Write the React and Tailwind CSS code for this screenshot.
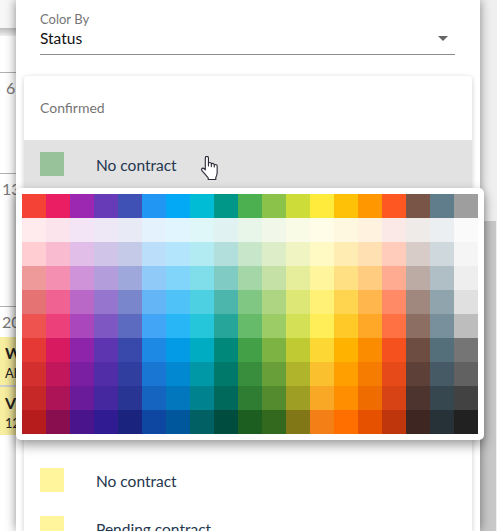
const hues = {
  red: ["#f44336","#ffebee","#ffcdd2","#ef9a9a","#e57373","#ef5350","#e53935","#d32f2f","#c62828","#b71c1c"],
  pink: ["#e91e63","#fce4ec","#f8bbd0","#f48fb1","#f06292","#ec407a","#d81b60","#c2185b","#ad1457","#880e4f"],
  purple: ["#9c27b0","#f3e5f5","#e1bee7","#ce93d8","#ba68c8","#ab47bc","#8e24aa","#7b1fa2","#6a1b9a","#4a148c"],
  deepPurple: ["#673ab7","#ede7f6","#d1c4e9","#b39ddb","#9575cd","#7e57c2","#5e35b1","#512da8","#4527a0","#311b92"],
  indigo: ["#3f51b5","#e8eaf6","#c5cae9","#9fa8da","#7986cb","#5c6bc0","#3949ab","#303f9f","#283593","#1a237e"],
  blue: ["#2196f3","#e3f2fd","#bbdefb","#90caf9","#64b5f6","#42a5f5","#1e88e5","#1976d2","#1565c0","#0d47a1"],
  lightBlue: ["#03a9f4","#e1f5fe","#b3e5fc","#81d4fa","#4fc3f7","#29b6f6","#039be5","#0288d1","#0277bd","#01579b"],
  cyan: ["#00bcd4","#e0f7fa","#b2ebf2","#80deea","#4dd0e1","#26c6da","#00acc1","#0097a7","#00838f","#006064"],
  teal: ["#009688","#e0f2f1","#b2dfdb","#80cbc4","#4db6ac","#26a69a","#00897b","#00796b","#00695c","#004d40"],
  green: ["#4caf50","#e8f5e9","#c8e6c9","#a5d6a7","#81c784","#66bb6a","#43a047","#388e3c","#2e7d32","#1b5e20"],
  lightGreen: ["#8bc34a","#f1f8e9","#dcedc8","#c5e1a5","#aed581","#9ccc65","#7cb342","#689f38","#558b2f","#33691e"],
  lime: ["#cddc39","#f9fbe7","#f0f4c3","#e6ee9c","#dce775","#d4e157","#c0ca33","#afb42b","#9e9d24","#827717"],
  yellow: ["#ffeb3b","#fffde7","#fff9c4","#fff59d","#fff176","#ffee58","#fdd835","#fbc02d","#f9a825","#f57f17"],
  amber: ["#ffc107","#fff8e1","#ffecb3","#ffe082","#ffd54f","#ffca28","#ffb300","#ffa000","#ff8f00","#ff6f00"],
  orange: ["#ff9800","#fff3e0","#ffe0b2","#ffcc80","#ffb74d","#ffa726","#fb8c00","#f57c00","#ef6c00","#e65100"],
  deepOrange: ["#ff5722","#fbe9e7","#ffccbc","#ffab91","#ff8a65","#ff7043","#f4511e","#e64a19","#d84315","#bf360c"],
  brown: ["#795548","#efebe9","#d7ccc8","#bcaaa4","#a1887f","#8d6e63","#6d4c41","#5d4037","#4e342e","#3e2723"],
  blueGrey: ["#607d8b","#eceff1","#cfd8dc","#b0bec5","#90a4ae","#78909c","#546e7a","#455a64","#37474f","#263238"],
  grey: ["#9e9e9e","#fafafa","#f5f5f5","#eeeeee","#e0e0e0","#bdbdbd","#757575","#616161","#424242","#212121"],
};
const columns = Object.values(hues);
const font = { fontFamily: 'Lato, "Noto Sans", sans-serif' };

function Hand() {
  return (
    <svg width="19" height="24" viewBox="1 1.5 15.5 21.5" className="absolute z-[15] left-[200px] top-[156px]">
      <path d="M5 14V3.2a1.4 1.4 0 0 1 2.8 0V10.5V8.6a1.3 1.3 0 0 1 2.6 0v2.4V9.4a1.3 1.3 0 0 1 2.6 0v2V10.4a1.3 1.3 0 0 1 2.6 0v5.8c0 2.2-.6 3.4-1.2 4.6v1.7H7.6v-1.4L2 14.6c-.8-1-.2-2.2.9-2.2.7 0 1.3.4 2.1 1.6z" fill="#fff" stroke="#2b2b38" strokeWidth="1" strokeLinejoin="round" />
    </svg>
  );
}

function Row({ color, label, className = "" }) {
  return (
    <div className={`h-12 flex items-center px-4 ${className}`}>
      <div className="size-6" style={{ backgroundColor: color }} />
      <div className="ml-8 pt-[3px] text-[#24364f]">{label}</div>
    </div>
  );
}

function Event({ title, sub }) {
  return (
    <div className="h-12 bg-[#f8ee9f] overflow-hidden pl-[5px] pt-[6px] text-[#222] whitespace-nowrap">
      <div className="font-bold text-[16px] leading-[20px]">{title}</div>
      <div className="text-[13px] leading-[20px]">{sub}</div>
    </div>
  );
}

function DayCell({ height, pad, label }) {
  return (
    <div className={`border-t border-[#b0b0b0] text-[#777] text-[16px] leading-[20px] whitespace-nowrap ${height} ${pad}`}>{label}</div>
  );
}

export default function App() {
  return (
    <div className="relative flex w-[497px] h-[531px] overflow-hidden bg-[#efefef] text-[15.5px]" style={font}>
      <div className="w-4 shrink-0 overflow-hidden bg-white">
        <div className="h-7 bg-[#f7f7f7]" />
        <div className="h-2 bg-gradient-to-b from-[#bdbdbd] to-[#efefef]" />
        <div className="h-9" />
        <DayCell height="h-[101px]" pad="pl-[6px] pt-[5px]" label="6" />
        <DayCell height="h-[133px]" pad="pl-[2px] pt-[5px]" label="13" />
        <DayCell height="h-[31px]" pad="pl-[2px] pt-[5px]" label="20" />
        <Event title="WA" sub="All" />
        <div className="h-[2px] bg-[#cfcfcf]" />
        <Event title="VS" sub="12" />
      </div>

      <div className="relative z-10 w-[464px] shrink-0 bg-white shadow-[0_0_10px_rgba(0,0,0,0.45)] px-2">
        <div className="px-4 pt-[11px]">
          <div className="text-[13px] leading-[16px] text-[#757575]">Color By</div>
          <div className="flex items-center justify-between h-7 pb-1 mr-px border-b border-[#8c8c8c] pr-[7px] text-[#111]">
            <span>Status</span>
            <span className="w-0 h-0 border-x-[5px] border-x-transparent border-t-[5px] border-t-[#666]" />
          </div>
        </div>
        <div className="mt-[21px] rounded-[4px] bg-white shadow-[0_1px_5px_rgba(0,0,0,0.2)]">
          <div className="h-16 pb-[2px] px-4 flex items-center text-[14px] text-[#757575]">Confirmed</div>
          <Row color="#97c29a" label="No contract" className="bg-[#e2e2e2]" />
          <div className="h-[268px]" />
          <Row color="#fff59d" label="No contract" />
          <Row color="#fff59d" label="Pending contract" />
        </div>
      </div>

      <div className="flex-1 pt-[221px] pr-px">
        <div className="h-full bg-[#c8c8c8]" />
      </div>

      <Hand />

      <div className="absolute z-20 left-4 top-[188px] rounded-[5px] bg-white p-[6px] shadow-[0_5px_12px_rgba(0,0,0,0.4)]">
        <div className="flex">
          {columns.map((col, i) => (
            <div key={i} className="w-6">
              {col.map((c) => (
                <div key={c} className="h-6" style={{ backgroundColor: c }} />
              ))}
            </div>
          ))}
        </div>
      </div>
    </div>
  );
}
